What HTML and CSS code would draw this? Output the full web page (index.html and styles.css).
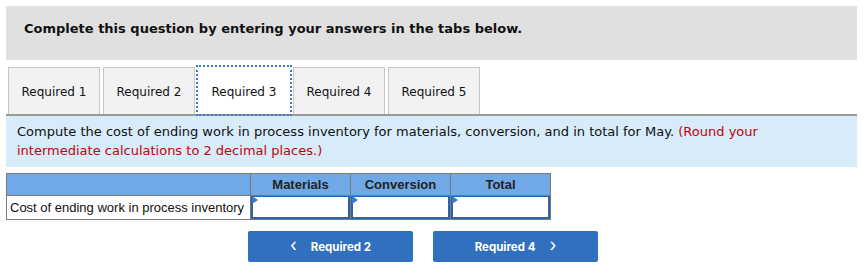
FILE: index.html
```html
<!DOCTYPE html>
<html>
<head>
<meta charset="utf-8">
<link rel="stylesheet" href="styles.css">
</head>
<body>
<div class="wrap">
  <div class="header">Complete this question by entering your answers in the tabs below.</div>
  <div class="tabs">
    <div class="tab">Required 1</div>
    <div class="tab">Required 2</div>
    <div class="tab active">Required 3</div>
    <div class="tab">Required 4</div>
    <div class="tab">Required 5</div>
  </div>
  <div class="panel">
    <p class="q">Compute the cost of ending work in process inventory for materials, conversion, and in total for May. <span class="red">(Round your intermediate calculations to 2 decimal places.)</span></p>
  </div>
  <table class="grid">
    <tr class="head">
      <th class="label"></th>
      <th>Materials</th>
      <th>Conversion</th>
      <th>Total</th>
    </tr>
    <tr>
      <td class="label">Cost of ending work in process inventory</td>
      <td class="in"><div class="box"></div></td>
      <td class="in"><div class="box"></div></td>
      <td class="in"><div class="box"></div></td>
    </tr>
  </table>
  <div class="nav">
    <div class="btn"><span class="chev">&lsaquo;</span><span>Required 2</span></div>
    <div class="btn"><span>Required 4</span><span class="chev">&rsaquo;</span></div>
  </div>
</div>
</body>
</html>
```
FILE: styles.css
```css
html, body { margin: 0; padding: 0; background: #fff; }
.wrap {
  padding: 6px;
  width: 851px;
  font-family: "DejaVu Sans", Verdana, sans-serif;
  color: #111;
}
.header {
  background: #e0e0e0;
  height: 54px;
  box-sizing: border-box;
  padding: 15px 0 0 18px;
  font-weight: bold;
  font-size: 13px;
  line-height: 16px;
}
.tabs {
  display: flex;
  gap: 3px;
  margin-top: 7px;
  padding-left: 2px;
  border-bottom: 2px solid #9a9a9a;
  height: 47px;
}
.tab {
  width: 92px;
  box-sizing: border-box;
  background: #f2f2f2;
  border: 1px solid #c6c6c6;
  border-bottom: none;
  font-size: 12px;
  display: flex;
  align-items: center;
  justify-content: center;
  padding-top: 1px;
}
.tab.active {
  background: #fff;
  outline: 2px dotted #3a78c9;
  outline-offset: 0px;
  border-color: #fff;
}
.panel {
  background: #d8ebf9;
  height: 51px;
  box-sizing: border-box;
  padding: 6px 80px 0 11px;
}
.q {
  margin: 0;
  font-size: 13px;
  line-height: 19px;
  color: #111;
}
.red { color: #c8000a; }
.grid {
  margin-top: 6px;
  border-collapse: collapse;
  font-family: "Liberation Sans", Arial, sans-serif;
  font-size: 13px;
}
.grid th {
  background: #70a9e5;
  border: 1px solid #7a7a7a;
  height: 21px;
  padding: 0;
  font-weight: bold;
  color: #222;
  width: 99px;
}
.grid th.label { width: 243px; }
.grid td {
  border: 1px solid #7a7a7a;
  height: 22px;
  padding: 0;
}
.grid td.label { padding: 0 4px 0 3px; color: #111; }
.box {
  position: relative;
  height: 20px;
  border: 1px solid #2f63a6;
  border-width: 1px 2px 2px 2px;
  background: #fff;
}
.box::before {
  content: "";
  position: absolute;
  left: -1px;
  top: -1px;
  border-left: 6px solid #3a78c9;
  border-top: 4px solid transparent;
  border-bottom: 4px solid transparent;
}
.nav {
  display: flex;
  gap: 20px;
  margin-top: 11px;
  padding-left: 242px;
}
.btn {
  width: 165px;
  height: 31px;
  background: #3070be;
  border-radius: 2px;
  color: #fff;
  font-family: Inter, "Noto Sans", sans-serif;
  font-weight: bold;
  font-size: 11.5px;
  display: flex;
  align-items: center;
  justify-content: center;
  gap: 14px;
}
.chev { font-size: 18px; font-weight: normal; line-height: 1; margin-top: -3px; }
```
